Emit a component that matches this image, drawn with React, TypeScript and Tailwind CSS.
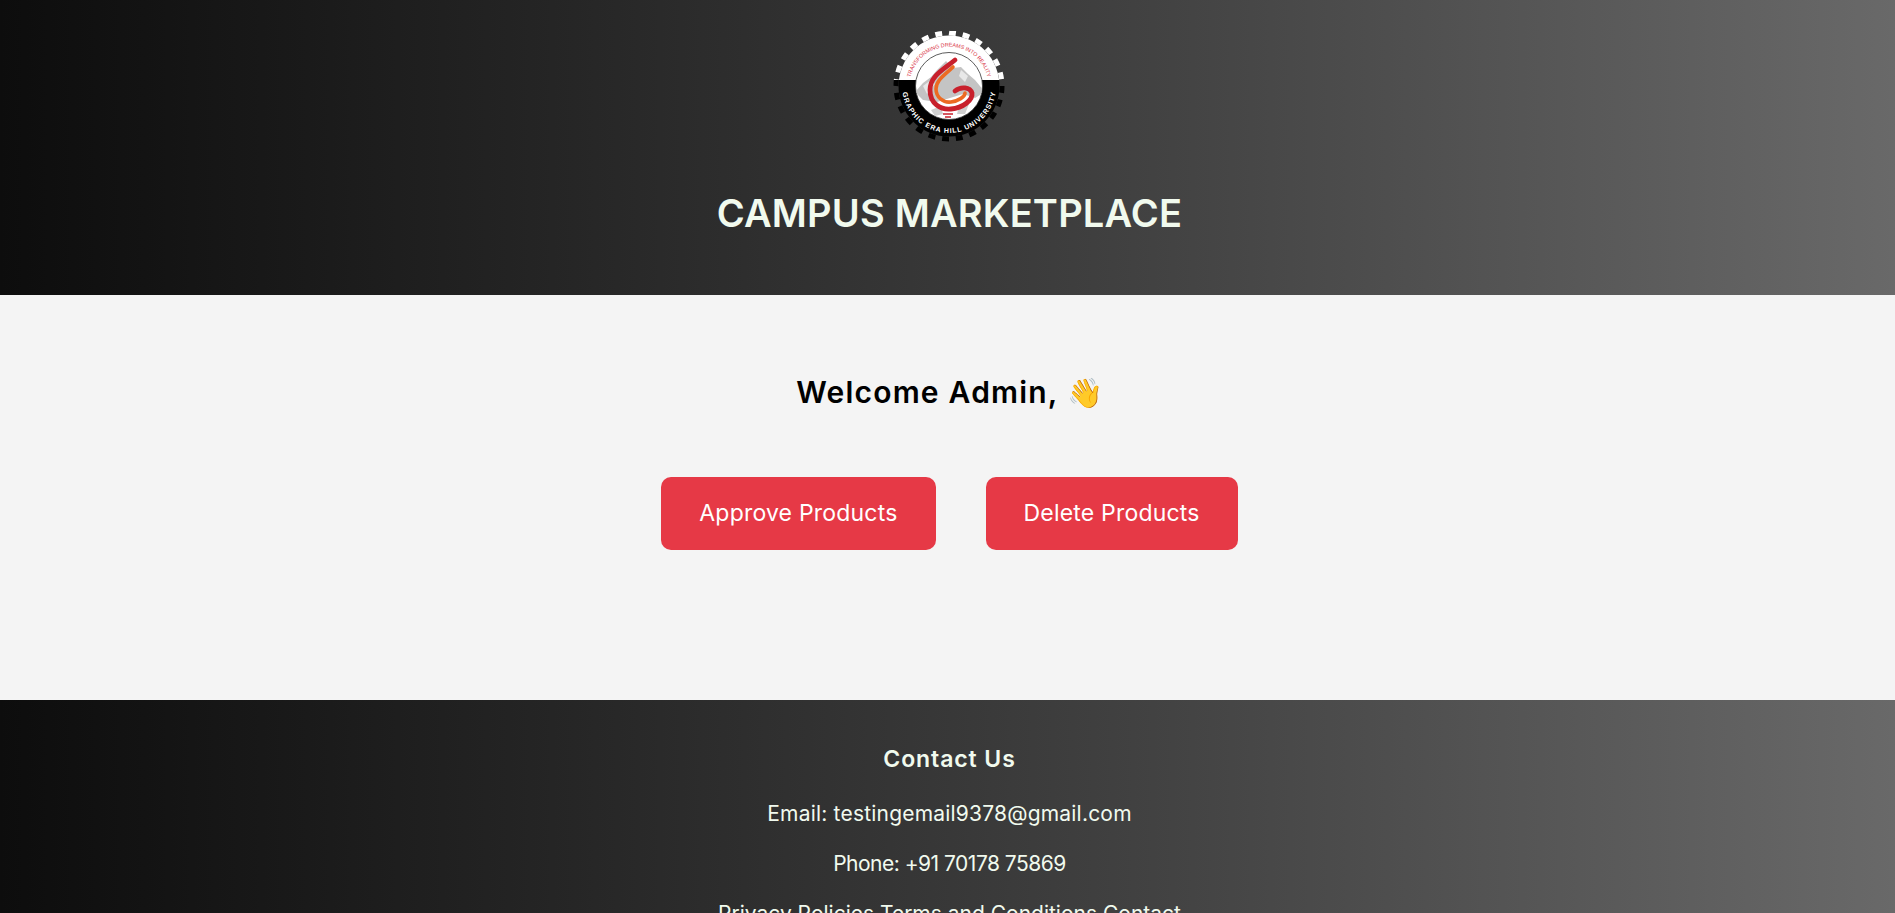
import React from "react";

const font = "font-['Inter','Liberation_Sans',sans-serif]";
const buttonClass =
	"h-[73px] px-[38px] rounded-[10px] bg-[#e63946] text-white text-[23px] tracking-[0.2px]";

// Graphic Era Hill University seal
function Logo() {
	return (
		<svg viewBox="0 0 112 112" className="w-[112px] h-[112px] block -ml-[2px]">
			<defs>
				<clipPath id="topHalf">
					<rect x="0" y="0" width="112" height="50" />
				</clipPath>
				<clipPath id="bottomHalf">
					<rect x="0" y="50" width="112" height="62" />
				</clipPath>
				<clipPath id="innerDisc">
					<circle cx="56" cy="56" r="33" />
				</clipPath>
				<path id="topArc" d="M 17.8 66.2 A 39.5 39.5 0 1 1 94.2 66.2" />
				<path id="bottomArc" d="M 10.6 43.8 A 47 47 0 1 0 101.4 43.8" />
			</defs>
			<g clipPath="url(#topHalf)">
				<circle cx="56" cy="56" r="50.5" fill="#fff" />
				<circle cx="56" cy="56" r="53" fill="none" stroke="#fff" strokeWidth="5" pathLength="48" strokeDasharray="1 1" />
			</g>
			<g clipPath="url(#bottomHalf)">
				<circle cx="56" cy="56" r="50.5" fill="#000" />
				<circle cx="56" cy="56" r="53" fill="none" stroke="#000" strokeWidth="5" pathLength="48" strokeDasharray="1 1" />
			</g>
			<text fontFamily="Liberation Sans, sans-serif" fontSize="5.4" fill="#d8323f">
				<textPath href="#topArc" startOffset="50%" textAnchor="middle" textLength="106">TRANSFORMING DREAMS INTO REALITY</textPath>
			</text>
			<text fontFamily="Liberation Sans, sans-serif" fontSize="7" fontWeight="700" fill="#fff">
				<textPath href="#bottomArc" startOffset="50%" textAnchor="middle" textLength="134">GRAPHIC ERA HILL UNIVERSITY</textPath>
			</text>
			<circle cx="56" cy="56" r="33.5" fill="#fff" stroke="#333" strokeWidth="0.8" />
			<g clipPath="url(#innerDisc)">
				<path d="M22 62 L30 53 L38 47 L44 40 L53 31 L60 38 L68 37 L75 44 L82 50 L92 62 L82 68 L70 64 L44 72 L30 70 Z" fill="#c4c4c4" />
				<path d="M30 56 L38 50 L42 54 L34 64 Z M68 40 L75 46 L72 52 L66 46 Z" fill="#e8e8e8" />
				<path d="M38 80 L48 76 L50 84 L42 86 Z M66 76 L76 74 L72 84 L64 84 Z" fill="#cfcfcf" />
			</g>
			<path d="M62 30 C50 40 37 46 37 60 C37 74 48 80 58 79 C70 78 80 70 79 63 C77 57 68 56 62 61" fill="none" stroke="#c8202c" strokeWidth="4.8" strokeLinecap="round" />
			<path d="M60 37 C52 45 43 50 43 59 C43 67 50 73 58 72 C65 71 72 67 72 63" fill="none" stroke="#ec6a22" strokeWidth="3.6" strokeLinecap="round" />
			<path d="M50 84 H60 M52 87 H58" stroke="#c8202c" strokeWidth="1.4" />
		</svg>
	);
}

export default function App() {
	return (
		<div className={`h-[913px] overflow-hidden flex flex-col ${font}`}>
			{/* Header */}
			<header className="h-[295px] shrink-0 bg-gradient-to-r from-[#0d0d0d] to-[#696969] flex flex-col items-center pt-[30px] pl-[4px]">
				<Logo />
				<h1 className="mt-[41px] text-[38px] leading-[60px] font-semibold text-[#f1faee] tracking-[0.2px]">
					CAMPUS MARKETPLACE
				</h1>
			</header>

			{/* Admin actions */}
			<main className="h-[405px] shrink-0 bg-[#f4f4f4] flex flex-col items-center pt-[75px] pl-[4px]">
				<h2 className="h-[44px] text-[30px] leading-[44px] font-semibold text-black tracking-[1.2px]">
					Welcome Admin, <span className="text-[29px] leading-none tracking-normal">👋</span>
				</h2>
				<div className="mt-[63px] flex gap-[50px]">
					<button className={buttonClass}>Approve Products</button>
					<button className={buttonClass}>Delete Products</button>
				</div>
			</main>

			{/* Footer */}
			<footer className="flex-1 bg-gradient-to-r from-[#0d0d0d] to-[#696969] flex flex-col items-center text-[#f1faee] pt-[43px] pl-[4px]">
				<h3 className="text-[23px] leading-[33px] font-semibold tracking-[0.9px]">Contact Us</h3>
				<p className="mt-[23px] text-[21px] leading-[30px] tracking-[0.2px]">Email: testingemail9378@gmail.com</p>
				<p className="mt-[20px] text-[21px] leading-[30px] tracking-[-0.5px]">Phone: +91 70178 75869</p>
				<p className="mt-[20px] text-[21px] leading-[30px]">Privacy Policies Terms and Conditions Contact</p>
			</footer>
		</div>
	);
}
